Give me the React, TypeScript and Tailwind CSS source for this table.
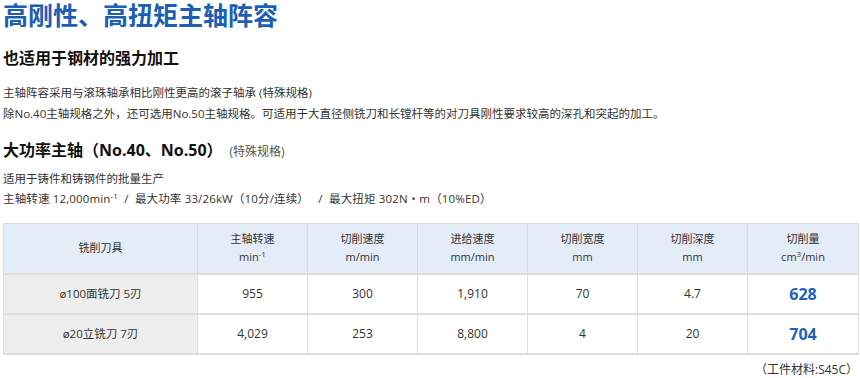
const headers = [
    { name: "主轴转速", unit: <>min<sup className="text-[8px]">-1</sup></> },
    { name: "切削速度", unit: <>m/min</> },
    { name: "进给速度", unit: <>mm/min</> },
    { name: "切削宽度", unit: <>mm</> },
    { name: "切削深度", unit: <>mm</> },
    { name: "切削量", unit: <>cm<sup className="text-[8px]">3</sup>/min</> }
];

const rows = [
    { tool: "ø100面铣刀 5刃", values: ["955", "300", "1,910", "70", "4.7"], result: "628" },
    { tool: "ø20立铣刀 7刃", values: ["4,029", "253", "8,800", "4", "20"], result: "704" }
];

const App = () => {
    return (
        <div
            className="w-[860px] bg-white pl-[3px] pr-[2px] text-[#333333]"
            style={{ fontFamily: '"Open Sans", "Noto Sans CJK SC", sans-serif' }}>
            <h1 className="pt-[1px] text-[25px] leading-[29px] font-bold text-[#1b5fb5]">
                高刚性、高扭矩主轴阵容
            </h1>
            <h2 className="mt-[16px] text-[16px] leading-[24px] font-bold text-[#111111]">
                也适用于钢材的强力加工
            </h2>
            <div className="mt-[12px] text-[11.5px] leading-[21px]">
                <p>主轴阵容采用与滚珠轴承相比刚性更高的滚子轴承 (特殊规格)</p>
                <p>除No.40主轴规格之外，还可选用No.50主轴规格。可适用于大直径侧铣刀和长镗杆等的对刀具刚性要求较高的深孔和突起的加工。</p>
            </div>
            <h3 className="mt-[14px] text-[16px] leading-[24px] font-bold text-[#111111] flex items-baseline">
                大功率主轴（No.40、No.50）
                <span className="ml-[7px] text-[12px] font-normal text-[#555555]">(特殊规格)</span>
            </h3>
            <div className="mt-[5px] text-[11.5px] leading-[20px]">
                <p>适用于铸件和铸钢件的批量生产</p>
                <p className="tracking-[0.15px]">
                    主轴转速 12,000min<sup className="text-[8px]">-1</sup>&nbsp;&nbsp;/&nbsp;&nbsp;最大功率 33/26kW（10分/连续）&nbsp;&nbsp;&nbsp;/&nbsp;&nbsp;最大扭矩 302N・m（10%ED）
                </p>
            </div>
            <table className="mt-[14px] w-[855px] border-collapse text-[12px] text-center table-fixed">
                <colgroup>
                    <col className="w-[194px]" />
                    <col className="w-[110px]" />
                    <col className="w-[110px]" />
                    <col className="w-[110px]" />
                    <col className="w-[110px]" />
                    <col className="w-[110px]" />
                    <col className="w-[111px]" />
                </colgroup>
                <thead>
                    <tr className="h-[50px] bg-[#e4ecf7] text-[11px] leading-[18px]">
                        <th className="font-normal border border-[#dcdcdc]">铣削刀具</th>
                        {headers.map((h) => (
                            <th key={h.name} className="font-normal border border-[#dcdcdc]">
                                <div>{h.name}</div>
                                <div>{h.unit}</div>
                            </th>
                        ))}
                    </tr>
                </thead>
                <tbody>
                    {rows.map((r) => (
                        <tr key={r.tool} className="h-[40px]">
                            <td className="bg-[#eeeeee] border-y-2 border-x border-[#dedede] text-[11.5px]">{r.tool}</td>
                            {r.values.map((v, i) => (
                                <td key={i} className="border-y-2 border-x border-[#dedede]">{v}</td>
                            ))}
                            <td className="border-y-2 border-x border-[#dedede] text-[16px] font-bold text-[#1b63bd]">
                                {r.result}
                            </td>
                        </tr>
                    ))}
                </tbody>
            </table>
            <p className="mt-[7px] pb-[2px] text-right text-[12px] leading-[16px]">（工件材料:S45C）</p>
        </div>
    );
};

export default App;
